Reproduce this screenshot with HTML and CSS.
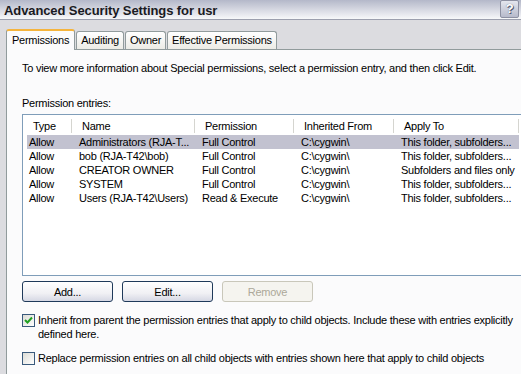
FILE: index.html
```html
<!DOCTYPE html>
<html lang="en">
<head>
    <meta charset="UTF-8">
    <title>Advanced Security Settings for usr</title>
    <link rel="stylesheet" href="styles.css">
</head>
<body>
    <div class="titlebar">
        <span class="title">Advanced Security Settings for usr</span>
        <span class="help-btn">?</span>
    </div>

    <div class="dialog">
        <div class="tabs">
            <div class="tab selected">Permissions</div>
            <div class="tab">Auditing</div>
            <div class="tab">Owner</div>
            <div class="tab">Effective Permissions</div>
        </div>

        <div class="panel">
            <p class="intro">To view more information about Special permissions, select a permission entry, and then click Edit.</p>
            <p class="list-label">Permission entries:</p>

            <div class="listview">
                <div class="list-header">
                    <div class="col-head">Type</div>
                    <div class="col-head">Name</div>
                    <div class="col-head">Permission</div>
                    <div class="col-head">Inherited From</div>
                    <div class="col-head">Apply To</div>
                </div>
                <div class="row selected">
                    <div class="cell">Allow</div>
                    <div class="cell">Administrators (RJA-T...</div>
                    <div class="cell">Full Control</div>
                    <div class="cell">C:\cygwin\</div>
                    <div class="cell">This folder, subfolders...</div>
                </div>
                <div class="row">
                    <div class="cell">Allow</div>
                    <div class="cell">bob (RJA-T42\bob)</div>
                    <div class="cell">Full Control</div>
                    <div class="cell">C:\cygwin\</div>
                    <div class="cell">This folder, subfolders...</div>
                </div>
                <div class="row">
                    <div class="cell">Allow</div>
                    <div class="cell">CREATOR OWNER</div>
                    <div class="cell">Full Control</div>
                    <div class="cell">C:\cygwin\</div>
                    <div class="cell">Subfolders and files only</div>
                </div>
                <div class="row">
                    <div class="cell">Allow</div>
                    <div class="cell">SYSTEM</div>
                    <div class="cell">Full Control</div>
                    <div class="cell">C:\cygwin\</div>
                    <div class="cell">This folder, subfolders...</div>
                </div>
                <div class="row">
                    <div class="cell">Allow</div>
                    <div class="cell">Users (RJA-T42\Users)</div>
                    <div class="cell">Read &amp; Execute</div>
                    <div class="cell">C:\cygwin\</div>
                    <div class="cell">This folder, subfolders...</div>
                </div>
            </div>

            <div class="buttons">
                <button>Add...</button>
                <button>Edit...</button>
                <button disabled>Remove</button>
            </div>

            <label class="check first">
                <span class="box">
                    <svg width="9" height="9" viewBox="0 0 9 9"><path d="M1 4 L3.5 6.5 L8 1.5" fill="none" stroke="#21a121" stroke-width="2"/></svg>
                </span>
                <span class="check-text">Inherit from parent the permission entries that apply to child objects. Include these with entries explicitly defined here.</span>
            </label>

            <label class="check">
                <span class="box"></span>
                <span class="check-text">Replace permission entries on all child objects with entries shown here that apply to child objects</span>
            </label>
        </div>
    </div>
</body>
</html>
```

FILE: styles.css
```css
body {
    margin: 0;
    width: 521px;
    height: 374px;
    overflow: hidden;
    font-family: "Liberation Sans", Arial, sans-serif;
    font-size: 11px;
    letter-spacing: -0.25px;
    color: #000;
    background: #dcdce0;
}

.titlebar {
    height: 19px;
    display: flex;
    align-items: center;
    justify-content: space-between;
    padding: 0 2px 0 4px;
    background: linear-gradient(to bottom, #b4b8c9, #d9dbe4 55%, #f7f8fa);
    border-bottom: 1px solid #9c9fae;
}

.title {
    font-weight: bold;
    font-size: 13px;
    letter-spacing: -0.1px;
    color: #1a1a22;
    margin-top: 1px;
}

.help-btn {
    width: 17px;
    height: 16px;
    margin-top: -2px;
    border: 1px solid #8d90a2;
    border-radius: 2px;
    background: linear-gradient(to bottom, #e4e6ee, #b7bacb);
    color: #fff;
    font-weight: bold;
    font-size: 13px;
    text-align: center;
    line-height: 16px;
    text-shadow: 0 0 1px #555a70, 1px 1px 0 #555a70;
}

.dialog {
    padding: 9px 0 0 6px;
}

.tabs {
    display: flex;
    align-items: flex-end;
    height: 20px;
    position: relative;
    z-index: 1;
}

.tab {
    height: 17px;
    line-height: 17px;
    padding: 0 4px;
    margin-right: 1px;
    border: 1px solid #919b9c;
    border-bottom: none;
    border-radius: 3px 3px 0 0;
    background: linear-gradient(to bottom, #ffffff, #ecebe6);
}

.tab.selected {
    height: 19px;
    line-height: 19px;
    padding: 0 5px;
    margin-bottom: -1px;
    border-top: 2px solid #f5b43c;
    background: #fbfbfc;
}

.panel {
    box-sizing: border-box;
    height: 325px;
    border-left: 1px solid #919b9c;
    border-top: 1px solid #919b9c;
    background: #fbfbfc;
    padding: 11px 0 0 15px;
}

.intro,
.list-label {
    margin: 0;
    line-height: 14px;
}

.list-label {
    margin-top: 21px;
}

.listview {
    margin-top: 4px;
    width: 520px;
    height: 160px;
    border: 1px solid #7f9db9;
    background: #fff;
}

.list-header {
    display: grid;
    grid-template-columns: 49px 123px 99px 100px 125px;
    height: 20px;
    align-items: center;
}

.col-head {
    padding-left: 10px;
    line-height: 14px;
    border-right: 1px solid #d5d5d0;
    height: 14px;
    margin-top: 1px;
}

.row {
    display: grid;
    grid-template-columns: 45px 123px 99px 100px 125px;
    margin-left: 4px;
    width: 492px;
    height: 14px;
    line-height: 14px;
    white-space: nowrap;
}

.row.selected {
    background: #c2c2d0;
}

.cell {
    padding-left: 7px;
    overflow: hidden;
}

.cell:first-child {
    padding-left: 2px;
}

.cell:last-child {
    overflow: visible;
}

.buttons {
    display: flex;
    gap: 9px;
    margin-top: 5px;
}

button {
    width: 91px;
    height: 21px;
    font-family: inherit;
    font-size: 11px;
    letter-spacing: -0.25px;
    color: #000;
    border: 1px solid #1f3a5a;
    border-radius: 3px;
    background: linear-gradient(to bottom, #ffffff, #f0f0f4 60%, #d6d8e4);
    padding: 0;
}

button:disabled {
    color: #aca899;
    border-color: #c9c7ba;
    background: #f5f4ef;
}

.check {
    display: flex;
    align-items: flex-start;
    line-height: 14px;
    margin-top: 10px;
}

.check.first {
    margin-top: 11px;
}

.box {
    flex: none;
    width: 11px;
    height: 11px;
    margin-top: 1px;
    margin-right: 3px;
    border: 1px solid #3a5a7c;
    background: linear-gradient(135deg, #dcdcd6, #ffffff);
    display: flex;
    align-items: center;
    justify-content: center;
}

.check-text {
    width: 484px;
}
```
